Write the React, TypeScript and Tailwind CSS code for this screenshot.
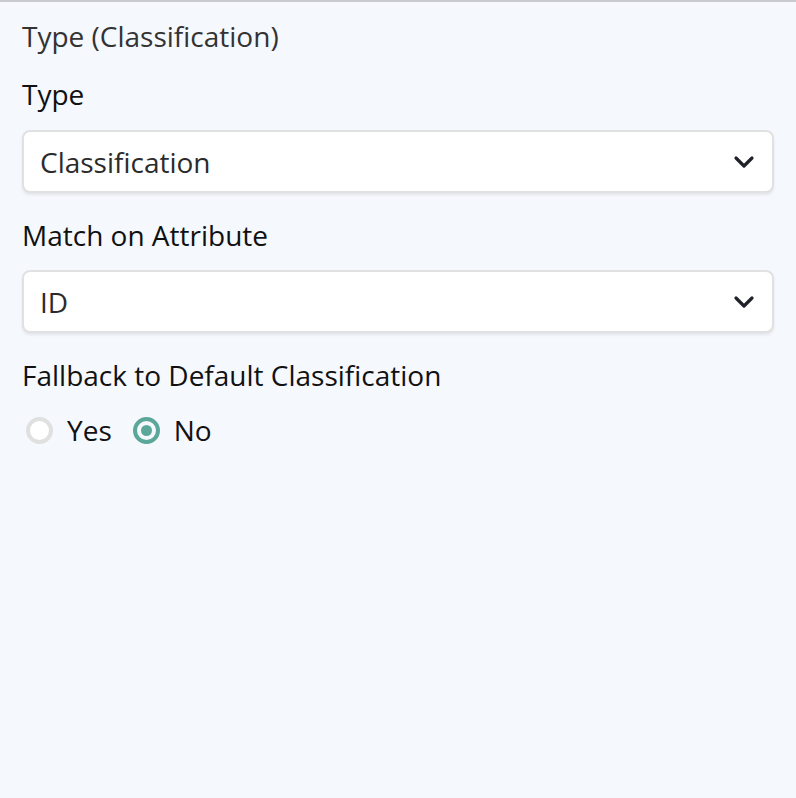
import { useState } from "react";

const font = { fontFamily: '"Open Sans", "Noto Sans", sans-serif' };

function Chevron() {
    return (
        <svg width="24" height="24" viewBox="0 0 24 24" fill="none" stroke="#1f2329" strokeWidth="3.2" strokeLinecap="round" strokeLinejoin="round">
            <path d="M4 8l8 8 8-8" />
        </svg>
    );
}

function SelectBox({ value }: { value: string }) {
    return (
        <div className="h-[63px] w-full rounded-[8px] border-2 border-[#e1e1e1] bg-white shadow-[0_2px_3px_rgba(0,0,0,0.08)] flex items-center justify-between pl-[16px] pr-[16px]">
            <span className="text-[28px] leading-[38px] text-[#2b2b2b]">{value}</span>
            <Chevron />
        </div>
    );
}

function Radio({ label, checked, onClick }: { label: string; checked: boolean; onClick: () => void }) {
    return (
        <button type="button" onClick={onClick} className="flex items-center gap-[14px]">
            {checked ? (
                <span className="w-[27px] h-[27px] rounded-full border-[4px] border-[#5ba799] flex items-center justify-center">
                    <span className="w-[11px] h-[11px] rounded-full bg-[#5ba799]" />
                </span>
            ) : (
                <span className="w-[27px] h-[27px] rounded-full border-[4px] border-[#e0e0e0] bg-white" />
            )}
            <span className="text-[28px] leading-[38px] text-[#111]">{label}</span>
        </button>
    );
}

export default function App() {
    const [fallback, setFallback] = useState<"yes" | "no">("no");

    return (
        <div style={font} className="min-h-[798px] w-full bg-[#f5f8fd] border-t-2 border-[#c9cacd]">
            <div className="px-[22px] pt-[14px] flex flex-col">
                <h2 className="text-[28px] text-[#333] leading-[40px]">Type (Classification)</h2>
                <label className="mt-[20px] text-[28px] font-medium text-[#111] leading-[36px]">Type</label>
                <div className="mt-[18px]">
                    <SelectBox value="Classification" />
                </div>
                <label className="mt-[24px] text-[28px] font-medium text-[#111] leading-[36px]">Match on Attribute</label>
                <div className="mt-[17px]">
                    <SelectBox value="ID" />
                </div>
                <label className="mt-[24px] text-[28px] font-medium text-[#111] leading-[36px]">Fallback to Default Classification</label>
                <div className="mt-[18px] flex items-center gap-[21px] pl-[4px]">
                    <Radio label="Yes" checked={fallback === "yes"} onClick={() => setFallback("yes")} />
                    <Radio label="No" checked={fallback === "no"} onClick={() => setFallback("no")} />
                </div>
            </div>
        </div>
    );
}
